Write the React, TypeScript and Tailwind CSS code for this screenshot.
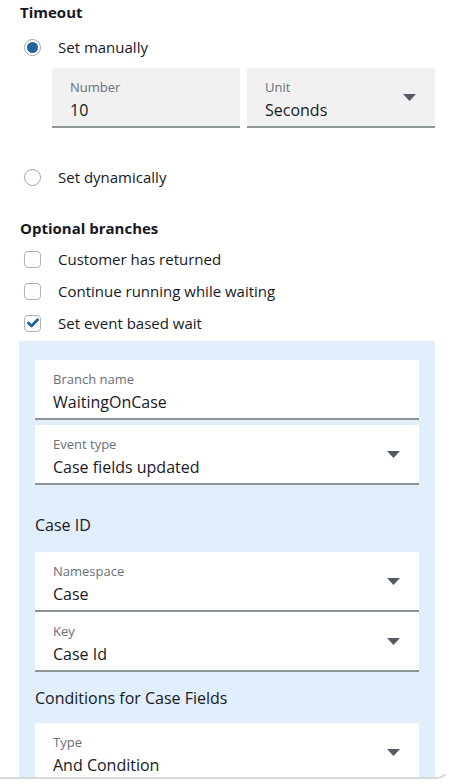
import React from "react";

const Caret = () => (
  <svg width="13" height="7" viewBox="0 0 13 7" className="shrink-0">
    <path d="M0 0 H13 L6.5 7 Z" fill="#545b64" />
  </svg>
);

type FieldProps = {
  label: string;
  value: string;
  select?: boolean;
  tone: "gray" | "white";
  className?: string;
};

const Field = ({ label, value, select, tone, className = "" }: FieldProps) => (
  <div
    className={`h-[60px] shrink-0 flex items-start border-b-2 border-[#8d9596] pl-[18px] pr-[19px] ${
      tone === "gray" ? "bg-[#f1f1f1]" : "bg-white"
    } ${className}`}
  >
    <div className="flex-1 flex flex-col pt-[11px]">
      <span className="text-[13px] leading-[16px] text-[#687078]">{label}</span>
      <span className="text-[16px] leading-[22px] text-[#16191f] mt-[4px]">{value}</span>
    </div>
    {select && (
      <div className="h-full flex items-center">
        <Caret />
      </div>
    )}
  </div>
);

const Radio = ({ checked, label }: { checked?: boolean; label: string }) => (
  <div className="h-[24px] flex items-center pl-[24px]">
    <span className="w-[17px] h-[17px] rounded-full border border-[#9ba7a8] bg-white flex items-center justify-center">
      {checked && <span className="w-[11px] h-[11px] rounded-full bg-[#20649b]" />}
    </span>
    <span className="ml-[17px] text-[15px] text-[#16191f]">{label}</span>
  </div>
);

const Check = ({ checked, label }: { checked?: boolean; label: string }) => (
  <div className="h-[24px] flex items-center pl-[24px]">
    <span className="w-[17px] h-[17px] rounded-[4px] border-[1.5px] border-[#aab7b8] bg-white flex items-center justify-center">
      {checked && (
        <svg width="12" height="10" viewBox="0 0 12 10">
          <path
            d="M1.5 5 L4.5 8 L10.5 1.8"
            fill="none"
            stroke="#20649b"
            strokeWidth="2.8"
            strokeLinecap="round"
            strokeLinejoin="round"
          />
        </svg>
      )}
    </span>
    <span className="ml-[17px] text-[15px] text-[#16191f]">{label}</span>
  </div>
);

export default function App() {
  return (
    <div className="w-[450px] h-[784px] bg-white font-['Open_Sans',sans-serif]">
      <div className="h-[779px] overflow-hidden border-b-2 border-r-2 border-b-[#d5d9da] border-r-transparent rounded-br-[14px]">
        <div className="h-[24px] flex items-center pl-[20px] text-[15px] font-bold text-[#16191f]">
          Timeout
        </div>

        <div className="mt-[11px]">
          <Radio checked label="Set manually" />
        </div>

        <div className="mt-[9px] ml-[52px] w-[383px] grid grid-cols-2 gap-[7px]">
          <Field tone="gray" label="Number" value="10" />
          <Field tone="gray" label="Unit" value="Seconds" select />
        </div>

        <div className="mt-[37px]">
          <Radio label="Set dynamically" />
        </div>

        <div className="mt-[27px] h-[24px] flex items-center pl-[20px] text-[15px] font-bold text-[#16191f]">
          Optional branches
        </div>

        <div className="mt-[7px] flex flex-col gap-[8px]">
          <Check label="Customer has returned" />
          <Check label="Continue running while waiting" />
          <Check checked label="Set event based wait" />
        </div>

        <div className="mt-[6px] ml-[19px] w-[416px] h-[436px] bg-[#e1eefb] px-[16px] pt-[19px] flex flex-col">
          <Field tone="white" label="Branch name" value="WaitingOnCase" />
          <Field tone="white" label="Event type" value="Case fields updated" select className="mt-[5px]" />

          <div className="mt-[28px] h-[24px] shrink-0 flex items-center text-[16px] text-[#16191f]">Case ID</div>

          <Field tone="white" label="Namespace" value="Case" select className="mt-[15px]" />
          <Field tone="white" label="Key" value="Case Id" select />

          <div className="mt-[14px] h-[24px] shrink-0 flex items-center text-[16px] text-[#16191f]">
            Conditions for Case Fields
          </div>

          <Field tone="white" label="Type" value="And Condition" select className="mt-[13px]" />
        </div>
      </div>
    </div>
  );
}
